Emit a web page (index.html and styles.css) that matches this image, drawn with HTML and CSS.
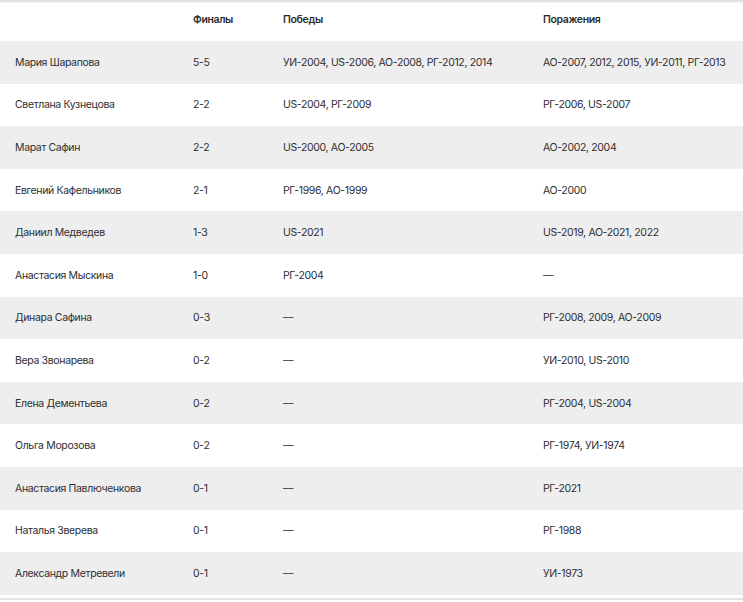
FILE: index.html
```html
<!DOCTYPE html>
<html lang="ru">
<head>
<meta charset="utf-8">
<link rel="stylesheet" href="styles.css">
</head>
<body>
<div class="wrap">
<table class="finals">
<colgroup><col class="c1"><col class="c2"><col class="c3"><col class="c4"></colgroup>
<thead>
<tr><th></th><th>Финалы</th><th>Победы</th><th>Поражения</th></tr>
</thead>
<tbody>
<tr><td>Мария Шарапова</td><td>5-5</td><td>УИ-2004, US-2006, АО-2008, РГ-2012, 2014</td><td>АО-2007, 2012, 2015, УИ-2011, РГ-2013</td></tr>
<tr><td>Светлана Кузнецова</td><td>2-2</td><td>US-2004, РГ-2009</td><td>РГ-2006, US-2007</td></tr>
<tr><td>Марат Сафин</td><td>2-2</td><td>US-2000, АО-2005</td><td>АО-2002, 2004</td></tr>
<tr><td>Евгений Кафельников</td><td>2-1</td><td>РГ-1996, АО-1999</td><td>АО-2000</td></tr>
<tr><td>Даниил Медведев</td><td>1-3</td><td>US-2021</td><td>US-2019, АО-2021, 2022</td></tr>
<tr><td>Анастасия Мыскина</td><td>1-0</td><td>РГ-2004</td><td>—</td></tr>
<tr><td>Динара Сафина</td><td>0-3</td><td>—</td><td>РГ-2008, 2009, АО-2009</td></tr>
<tr><td>Вера Звонарева</td><td>0-2</td><td>—</td><td>УИ-2010, US-2010</td></tr>
<tr><td>Елена Дементьева</td><td>0-2</td><td>—</td><td>РГ-2004, US-2004</td></tr>
<tr><td>Ольга Морозова</td><td>0-2</td><td>—</td><td>РГ-1974, УИ-1974</td></tr>
<tr><td>Анастасия Павлюченкова</td><td>0-1</td><td>—</td><td>РГ-2021</td></tr>
<tr><td>Наталья Зверева</td><td>0-1</td><td>—</td><td>РГ-1988</td></tr>
<tr><td>Александр Метревели</td><td>0-1</td><td>—</td><td>УИ-1973</td></tr>
</tbody>
</table>
<div class="bottom-line"></div>
</div>
</body>
</html>
```

FILE: styles.css
```css
html, body {
  margin: 0;
  padding: 0;
  background: #fff;
}
body {
  font-family: Inter, "Noto Sans", sans-serif;
  font-size: 10.5px;
  color: #2e2e33;
}
.wrap {
  width: 743px;
  border-top: 2px solid #e2e2e2;
}
.finals {
  width: 743px;
  border-collapse: collapse;
  table-layout: fixed;
  border-top: 1px solid #f4f4f4;
}
.c1 { width: 178px; }
.c2 { width: 90px; }
.c3 { width: 260px; }
.c4 { width: 215px; }
.finals th,
.finals td {
  padding: 0 0 0 15px;
  text-align: left;
  vertical-align: middle;
  white-space: nowrap;
  letter-spacing: -0.35px;
}
.finals th {
  height: 33px;
  padding-bottom: 5px;
  font-weight: 600;
  color: #2b2b2b;
}
.finals td {
  height: 42.6px;
}
.finals tbody tr:nth-child(odd) {
  background: #eeeeee;
}
.bottom-line {
  margin-top: 3px;
  height: 2px;
  background: #e2e2e2;
}
```
